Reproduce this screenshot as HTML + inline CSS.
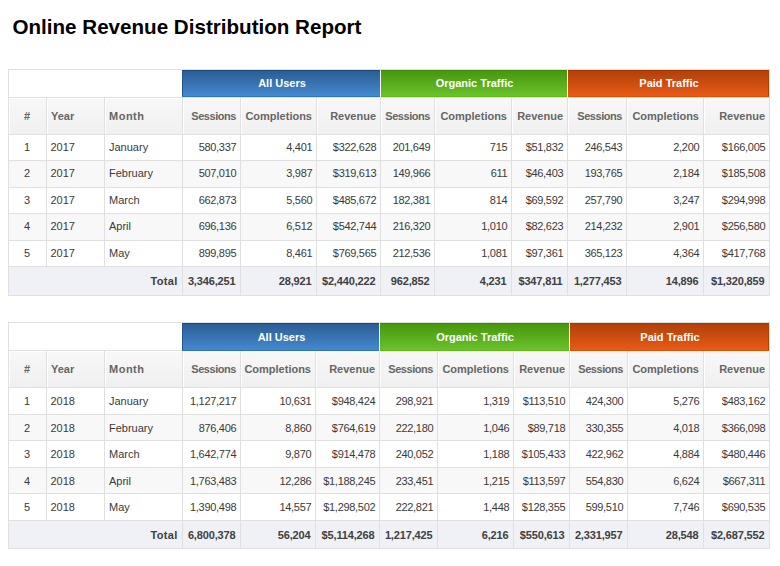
<!DOCTYPE html>
<html><head><meta charset="utf-8"><style>
html,body{margin:0;padding:0;background:#fff;width:780px;height:566px;overflow:hidden}
body{position:relative;font-family:"Liberation Sans",sans-serif}
div{position:absolute}
.t{white-space:nowrap;box-sizing:border-box}
.title{left:12.5px;top:15px;font-size:20.6px;font-weight:bold;color:#000;line-height:24px;white-space:nowrap}
.g{color:#fff;font-weight:bold;font-size:11px}
.h{color:#666;font-weight:bold;font-size:11px}
.d{color:#3a3a3a;font-size:11px}
.tt{color:#404040;font-weight:bold;font-size:11px}
.n{letter-spacing:-0.3px}
</style></head><body>
<div class="title">Online Revenue Distribution Report</div>
<div style="left:8px;top:69px;width:761px;height:226px;background:#fff"></div>
<div style="left:8px;top:97px;width:761px;height:37px;background:linear-gradient(#f8f8f8,#f0f0f0)"></div>
<div style="left:9px;top:98px;width:37px;height:36px;border-top:1px solid #fff;border-left:1px solid #fff;box-sizing:border-box"></div>
<div style="left:47px;top:98px;width:57px;height:36px;border-top:1px solid #fff;border-left:1px solid #fff;box-sizing:border-box"></div>
<div style="left:105px;top:98px;width:77px;height:36px;border-top:1px solid #fff;border-left:1px solid #fff;box-sizing:border-box"></div>
<div style="left:183px;top:98px;width:57px;height:36px;border-top:1px solid #fff;border-left:1px solid #fff;box-sizing:border-box"></div>
<div style="left:241px;top:98px;width:75px;height:36px;border-top:1px solid #fff;border-left:1px solid #fff;box-sizing:border-box"></div>
<div style="left:317px;top:98px;width:63px;height:36px;border-top:1px solid #fff;border-left:1px solid #fff;box-sizing:border-box"></div>
<div style="left:381px;top:98px;width:53px;height:36px;border-top:1px solid #fff;border-left:1px solid #fff;box-sizing:border-box"></div>
<div style="left:435px;top:98px;width:76px;height:36px;border-top:1px solid #fff;border-left:1px solid #fff;box-sizing:border-box"></div>
<div style="left:512px;top:98px;width:55px;height:36px;border-top:1px solid #fff;border-left:1px solid #fff;box-sizing:border-box"></div>
<div style="left:568px;top:98px;width:58px;height:36px;border-top:1px solid #fff;border-left:1px solid #fff;box-sizing:border-box"></div>
<div style="left:627px;top:98px;width:76px;height:36px;border-top:1px solid #fff;border-left:1px solid #fff;box-sizing:border-box"></div>
<div style="left:704px;top:98px;width:65px;height:36px;border-top:1px solid #fff;border-left:1px solid #fff;box-sizing:border-box"></div>
<div style="left:8px;top:160px;width:761px;height:27px;background:#f8f8f8"></div>
<div style="left:8px;top:213px;width:761px;height:27px;background:#f8f8f8"></div>
<div style="left:8px;top:266px;width:761px;height:29px;background:#eff1f6"></div>
<div style="left:8px;top:69px;width:762px;height:1px;background:#e0e0e0"></div>
<div style="left:8px;top:97px;width:762px;height:1px;background:#e0e0e0"></div>
<div style="left:8px;top:134px;width:762px;height:1px;background:#e0e0e0"></div>
<div style="left:8px;top:160px;width:762px;height:1px;background:#e0e0e0"></div>
<div style="left:8px;top:187px;width:762px;height:1px;background:#e0e0e0"></div>
<div style="left:8px;top:213px;width:762px;height:1px;background:#e0e0e0"></div>
<div style="left:8px;top:240px;width:762px;height:1px;background:#e0e0e0"></div>
<div style="left:8px;top:266px;width:762px;height:1px;background:#e0e0e0"></div>
<div style="left:8px;top:295px;width:762px;height:1px;background:#e0e0e0"></div>
<div style="left:8px;top:69px;width:1px;height:227px;background:#e0e0e0"></div>
<div style="left:46px;top:97px;width:1px;height:169px;background:#e0e0e0"></div>
<div style="left:104px;top:97px;width:1px;height:169px;background:#e0e0e0"></div>
<div style="left:182px;top:69px;width:1px;height:226px;background:#e0e0e0"></div>
<div style="left:240px;top:97px;width:1px;height:198px;background:#e0e0e0"></div>
<div style="left:316px;top:97px;width:1px;height:198px;background:#e0e0e0"></div>
<div style="left:380px;top:69px;width:1px;height:226px;background:#e0e0e0"></div>
<div style="left:434px;top:97px;width:1px;height:198px;background:#e0e0e0"></div>
<div style="left:511px;top:97px;width:1px;height:198px;background:#e0e0e0"></div>
<div style="left:567px;top:69px;width:1px;height:226px;background:#e0e0e0"></div>
<div style="left:626px;top:97px;width:1px;height:198px;background:#e0e0e0"></div>
<div style="left:703px;top:97px;width:1px;height:198px;background:#e0e0e0"></div>
<div style="left:769px;top:69px;width:1px;height:227px;background:#e0e0e0"></div>
<div style="left:182px;top:70px;width:198px;height:27px;background:linear-gradient(#2c5d95,#4489cf);border-top:1px solid #1c4a80;border-bottom:1px solid #2b78c0;border-left:1px solid #24558f;box-sizing:border-box"></div>
<div style="left:380px;top:70px;width:1px;height:27px;background:#f4f4f4"></div>
<div style="left:381px;top:70px;width:186px;height:27px;background:linear-gradient(#47980b,#6ac22c);border-top:1px solid #3a8a04;border-bottom:1px solid #5abd10;box-sizing:border-box"></div>
<div style="left:567px;top:70px;width:1px;height:27px;background:#f4f4f4"></div>
<div style="left:568px;top:70px;width:201px;height:27px;background:linear-gradient(#b2410a,#e85a16);border-top:1px solid #a83300;border-bottom:1px solid #e84c00;border-right:1px solid #b84000;box-sizing:border-box"></div>
<div class="t g" style="left:183px;top:70px;width:198px;height:27.5px;line-height:27.5px;text-align:center;">All Users</div>
<div class="t g" style="left:381px;top:70px;width:187px;height:27.5px;line-height:27.5px;text-align:center;">Organic Traffic</div>
<div class="t g" style="left:568px;top:70px;width:202px;height:27.5px;line-height:27.5px;text-align:center;">Paid Traffic</div>
<div class="t h" style="left:8px;top:98px;width:38px;height:37px;line-height:37px;text-align:center;">#</div>
<div class="t h" style="left:51px;top:98px;width:58px;height:37px;line-height:37px;text-align:left;">Year</div>
<div class="t h" style="left:109px;top:98px;width:78px;height:37px;line-height:37px;text-align:left;letter-spacing:0.5px">Month</div>
<div class="t h" style="left:182px;top:98px;width:54px;height:37px;line-height:37px;text-align:right;letter-spacing:-0.45px">Sessions</div>
<div class="t h" style="left:240px;top:98px;width:72px;height:37px;line-height:37px;text-align:right;">Completions</div>
<div class="t h" style="left:316px;top:98px;width:60px;height:37px;line-height:37px;text-align:right;">Revenue</div>
<div class="t h" style="left:380px;top:98px;width:50px;height:37px;line-height:37px;text-align:right;letter-spacing:-0.45px">Sessions</div>
<div class="t h" style="left:434px;top:98px;width:73px;height:37px;line-height:37px;text-align:right;">Completions</div>
<div class="t h" style="left:511px;top:98px;width:52px;height:37px;line-height:37px;text-align:right;">Revenue</div>
<div class="t h" style="left:567px;top:98px;width:55px;height:37px;line-height:37px;text-align:right;letter-spacing:-0.45px">Sessions</div>
<div class="t h" style="left:626px;top:98px;width:73px;height:37px;line-height:37px;text-align:right;">Completions</div>
<div class="t h" style="left:703px;top:98px;width:62px;height:37px;line-height:37px;text-align:right;">Revenue</div>
<div class="t d" style="left:8px;top:134px;width:38px;height:26px;line-height:26px;text-align:center;">1</div>
<div class="t d" style="left:50.5px;top:134px;width:58px;height:26px;line-height:26px;text-align:left;">2017</div>
<div class="t d" style="left:109px;top:134px;width:78px;height:26px;line-height:26px;text-align:left;">January</div>
<div class="t d n" style="left:182px;top:134px;width:54.3px;height:26px;line-height:26px;text-align:right;">580,337</div>
<div class="t d n" style="left:240px;top:134px;width:72.3px;height:26px;line-height:26px;text-align:right;">4,401</div>
<div class="t d n" style="left:316px;top:134px;width:60.3px;height:26px;line-height:26px;text-align:right;">$322,628</div>
<div class="t d n" style="left:380px;top:134px;width:50.3px;height:26px;line-height:26px;text-align:right;">201,649</div>
<div class="t d n" style="left:434px;top:134px;width:73.3px;height:26px;line-height:26px;text-align:right;">715</div>
<div class="t d n" style="left:511px;top:134px;width:52.3px;height:26px;line-height:26px;text-align:right;">$51,832</div>
<div class="t d n" style="left:567px;top:134px;width:55.3px;height:26px;line-height:26px;text-align:right;">246,543</div>
<div class="t d n" style="left:626px;top:134px;width:73.3px;height:26px;line-height:26px;text-align:right;">2,200</div>
<div class="t d n" style="left:703px;top:134px;width:62.3px;height:26px;line-height:26px;text-align:right;">$166,005</div>
<div class="t d" style="left:8px;top:160px;width:38px;height:27px;line-height:27px;text-align:center;">2</div>
<div class="t d" style="left:50.5px;top:160px;width:58px;height:27px;line-height:27px;text-align:left;">2017</div>
<div class="t d" style="left:109px;top:160px;width:78px;height:27px;line-height:27px;text-align:left;">February</div>
<div class="t d n" style="left:182px;top:160px;width:54.3px;height:27px;line-height:27px;text-align:right;">507,010</div>
<div class="t d n" style="left:240px;top:160px;width:72.3px;height:27px;line-height:27px;text-align:right;">3,987</div>
<div class="t d n" style="left:316px;top:160px;width:60.3px;height:27px;line-height:27px;text-align:right;">$319,613</div>
<div class="t d n" style="left:380px;top:160px;width:50.3px;height:27px;line-height:27px;text-align:right;">149,966</div>
<div class="t d n" style="left:434px;top:160px;width:73.3px;height:27px;line-height:27px;text-align:right;">611</div>
<div class="t d n" style="left:511px;top:160px;width:52.3px;height:27px;line-height:27px;text-align:right;">$46,403</div>
<div class="t d n" style="left:567px;top:160px;width:55.3px;height:27px;line-height:27px;text-align:right;">193,765</div>
<div class="t d n" style="left:626px;top:160px;width:73.3px;height:27px;line-height:27px;text-align:right;">2,184</div>
<div class="t d n" style="left:703px;top:160px;width:62.3px;height:27px;line-height:27px;text-align:right;">$185,508</div>
<div class="t d" style="left:8px;top:187px;width:38px;height:26px;line-height:26px;text-align:center;">3</div>
<div class="t d" style="left:50.5px;top:187px;width:58px;height:26px;line-height:26px;text-align:left;">2017</div>
<div class="t d" style="left:109px;top:187px;width:78px;height:26px;line-height:26px;text-align:left;">March</div>
<div class="t d n" style="left:182px;top:187px;width:54.3px;height:26px;line-height:26px;text-align:right;">662,873</div>
<div class="t d n" style="left:240px;top:187px;width:72.3px;height:26px;line-height:26px;text-align:right;">5,560</div>
<div class="t d n" style="left:316px;top:187px;width:60.3px;height:26px;line-height:26px;text-align:right;">$485,672</div>
<div class="t d n" style="left:380px;top:187px;width:50.3px;height:26px;line-height:26px;text-align:right;">182,381</div>
<div class="t d n" style="left:434px;top:187px;width:73.3px;height:26px;line-height:26px;text-align:right;">814</div>
<div class="t d n" style="left:511px;top:187px;width:52.3px;height:26px;line-height:26px;text-align:right;">$69,592</div>
<div class="t d n" style="left:567px;top:187px;width:55.3px;height:26px;line-height:26px;text-align:right;">257,790</div>
<div class="t d n" style="left:626px;top:187px;width:73.3px;height:26px;line-height:26px;text-align:right;">3,247</div>
<div class="t d n" style="left:703px;top:187px;width:62.3px;height:26px;line-height:26px;text-align:right;">$294,998</div>
<div class="t d" style="left:8px;top:213px;width:38px;height:27px;line-height:27px;text-align:center;">4</div>
<div class="t d" style="left:50.5px;top:213px;width:58px;height:27px;line-height:27px;text-align:left;">2017</div>
<div class="t d" style="left:109px;top:213px;width:78px;height:27px;line-height:27px;text-align:left;">April</div>
<div class="t d n" style="left:182px;top:213px;width:54.3px;height:27px;line-height:27px;text-align:right;">696,136</div>
<div class="t d n" style="left:240px;top:213px;width:72.3px;height:27px;line-height:27px;text-align:right;">6,512</div>
<div class="t d n" style="left:316px;top:213px;width:60.3px;height:27px;line-height:27px;text-align:right;">$542,744</div>
<div class="t d n" style="left:380px;top:213px;width:50.3px;height:27px;line-height:27px;text-align:right;">216,320</div>
<div class="t d n" style="left:434px;top:213px;width:73.3px;height:27px;line-height:27px;text-align:right;">1,010</div>
<div class="t d n" style="left:511px;top:213px;width:52.3px;height:27px;line-height:27px;text-align:right;">$82,623</div>
<div class="t d n" style="left:567px;top:213px;width:55.3px;height:27px;line-height:27px;text-align:right;">214,232</div>
<div class="t d n" style="left:626px;top:213px;width:73.3px;height:27px;line-height:27px;text-align:right;">2,901</div>
<div class="t d n" style="left:703px;top:213px;width:62.3px;height:27px;line-height:27px;text-align:right;">$256,580</div>
<div class="t d" style="left:8px;top:240px;width:38px;height:26px;line-height:26px;text-align:center;">5</div>
<div class="t d" style="left:50.5px;top:240px;width:58px;height:26px;line-height:26px;text-align:left;">2017</div>
<div class="t d" style="left:109px;top:240px;width:78px;height:26px;line-height:26px;text-align:left;">May</div>
<div class="t d n" style="left:182px;top:240px;width:54.3px;height:26px;line-height:26px;text-align:right;">899,895</div>
<div class="t d n" style="left:240px;top:240px;width:72.3px;height:26px;line-height:26px;text-align:right;">8,461</div>
<div class="t d n" style="left:316px;top:240px;width:60.3px;height:26px;line-height:26px;text-align:right;">$769,565</div>
<div class="t d n" style="left:380px;top:240px;width:50.3px;height:26px;line-height:26px;text-align:right;">212,536</div>
<div class="t d n" style="left:434px;top:240px;width:73.3px;height:26px;line-height:26px;text-align:right;">1,081</div>
<div class="t d n" style="left:511px;top:240px;width:52.3px;height:26px;line-height:26px;text-align:right;">$97,361</div>
<div class="t d n" style="left:567px;top:240px;width:55.3px;height:26px;line-height:26px;text-align:right;">365,123</div>
<div class="t d n" style="left:626px;top:240px;width:73.3px;height:26px;line-height:26px;text-align:right;">4,364</div>
<div class="t d n" style="left:703px;top:240px;width:62.3px;height:26px;line-height:26px;text-align:right;">$417,768</div>
<div class="t tt" style="left:8px;top:267px;width:169.5px;height:29px;line-height:29px;text-align:right;letter-spacing:0.3px">Total</div>
<div class="t tt" style="left:182px;top:267px;width:53.5px;height:29px;line-height:29px;text-align:right;letter-spacing:-0.15px">3,346,251</div>
<div class="t tt" style="left:240px;top:267px;width:71.5px;height:29px;line-height:29px;text-align:right;letter-spacing:-0.15px">28,921</div>
<div class="t tt" style="left:316px;top:267px;width:59.5px;height:29px;line-height:29px;text-align:right;letter-spacing:-0.15px">$2,440,222</div>
<div class="t tt" style="left:380px;top:267px;width:49.5px;height:29px;line-height:29px;text-align:right;letter-spacing:-0.15px">962,852</div>
<div class="t tt" style="left:434px;top:267px;width:72.5px;height:29px;line-height:29px;text-align:right;letter-spacing:-0.15px">4,231</div>
<div class="t tt" style="left:511px;top:267px;width:51.5px;height:29px;line-height:29px;text-align:right;letter-spacing:-0.15px">$347,811</div>
<div class="t tt" style="left:567px;top:267px;width:54.5px;height:29px;line-height:29px;text-align:right;letter-spacing:-0.15px">1,277,453</div>
<div class="t tt" style="left:626px;top:267px;width:72.5px;height:29px;line-height:29px;text-align:right;letter-spacing:-0.15px">14,896</div>
<div class="t tt" style="left:703px;top:267px;width:61.5px;height:29px;line-height:29px;text-align:right;letter-spacing:-0.15px">$1,320,859</div>
<div style="left:8px;top:322px;width:761px;height:226px;background:#fff"></div>
<div style="left:8px;top:350px;width:761px;height:37px;background:linear-gradient(#f8f8f8,#f0f0f0)"></div>
<div style="left:9px;top:351px;width:37px;height:36px;border-top:1px solid #fff;border-left:1px solid #fff;box-sizing:border-box"></div>
<div style="left:47px;top:351px;width:57px;height:36px;border-top:1px solid #fff;border-left:1px solid #fff;box-sizing:border-box"></div>
<div style="left:105px;top:351px;width:77px;height:36px;border-top:1px solid #fff;border-left:1px solid #fff;box-sizing:border-box"></div>
<div style="left:183px;top:351px;width:57px;height:36px;border-top:1px solid #fff;border-left:1px solid #fff;box-sizing:border-box"></div>
<div style="left:241px;top:351px;width:74px;height:36px;border-top:1px solid #fff;border-left:1px solid #fff;box-sizing:border-box"></div>
<div style="left:316px;top:351px;width:63px;height:36px;border-top:1px solid #fff;border-left:1px solid #fff;box-sizing:border-box"></div>
<div style="left:380px;top:351px;width:57px;height:36px;border-top:1px solid #fff;border-left:1px solid #fff;box-sizing:border-box"></div>
<div style="left:438px;top:351px;width:75px;height:36px;border-top:1px solid #fff;border-left:1px solid #fff;box-sizing:border-box"></div>
<div style="left:514px;top:351px;width:55px;height:36px;border-top:1px solid #fff;border-left:1px solid #fff;box-sizing:border-box"></div>
<div style="left:570px;top:351px;width:57px;height:36px;border-top:1px solid #fff;border-left:1px solid #fff;box-sizing:border-box"></div>
<div style="left:628px;top:351px;width:75px;height:36px;border-top:1px solid #fff;border-left:1px solid #fff;box-sizing:border-box"></div>
<div style="left:704px;top:351px;width:65px;height:36px;border-top:1px solid #fff;border-left:1px solid #fff;box-sizing:border-box"></div>
<div style="left:8px;top:414px;width:761px;height:26px;background:#f8f8f8"></div>
<div style="left:8px;top:467px;width:761px;height:26px;background:#f8f8f8"></div>
<div style="left:8px;top:520px;width:761px;height:28px;background:#eff1f6"></div>
<div style="left:8px;top:322px;width:762px;height:1px;background:#e0e0e0"></div>
<div style="left:8px;top:350px;width:762px;height:1px;background:#e0e0e0"></div>
<div style="left:8px;top:387px;width:762px;height:1px;background:#e0e0e0"></div>
<div style="left:8px;top:414px;width:762px;height:1px;background:#e0e0e0"></div>
<div style="left:8px;top:440px;width:762px;height:1px;background:#e0e0e0"></div>
<div style="left:8px;top:467px;width:762px;height:1px;background:#e0e0e0"></div>
<div style="left:8px;top:493px;width:762px;height:1px;background:#e0e0e0"></div>
<div style="left:8px;top:520px;width:762px;height:1px;background:#e0e0e0"></div>
<div style="left:8px;top:548px;width:762px;height:1px;background:#e0e0e0"></div>
<div style="left:8px;top:322px;width:1px;height:227px;background:#e0e0e0"></div>
<div style="left:46px;top:350px;width:1px;height:170px;background:#e0e0e0"></div>
<div style="left:104px;top:350px;width:1px;height:170px;background:#e0e0e0"></div>
<div style="left:182px;top:322px;width:1px;height:226px;background:#e0e0e0"></div>
<div style="left:240px;top:350px;width:1px;height:198px;background:#e0e0e0"></div>
<div style="left:315px;top:350px;width:1px;height:198px;background:#e0e0e0"></div>
<div style="left:379px;top:322px;width:1px;height:226px;background:#e0e0e0"></div>
<div style="left:437px;top:350px;width:1px;height:198px;background:#e0e0e0"></div>
<div style="left:513px;top:350px;width:1px;height:198px;background:#e0e0e0"></div>
<div style="left:569px;top:322px;width:1px;height:226px;background:#e0e0e0"></div>
<div style="left:627px;top:350px;width:1px;height:198px;background:#e0e0e0"></div>
<div style="left:703px;top:350px;width:1px;height:198px;background:#e0e0e0"></div>
<div style="left:769px;top:322px;width:1px;height:227px;background:#e0e0e0"></div>
<div style="left:182px;top:323px;width:197px;height:28px;background:linear-gradient(#2c5d95,#4489cf);border-top:1px solid #1c4a80;border-bottom:1px solid #2b78c0;border-left:1px solid #24558f;box-sizing:border-box"></div>
<div style="left:379px;top:323px;width:1px;height:28px;background:#f4f4f4"></div>
<div style="left:380px;top:323px;width:189px;height:28px;background:linear-gradient(#47980b,#6ac22c);border-top:1px solid #3a8a04;border-bottom:1px solid #5abd10;box-sizing:border-box"></div>
<div style="left:569px;top:323px;width:1px;height:28px;background:#f4f4f4"></div>
<div style="left:570px;top:323px;width:199px;height:28px;background:linear-gradient(#b2410a,#e85a16);border-top:1px solid #a83300;border-bottom:1px solid #e84c00;border-right:1px solid #b84000;box-sizing:border-box"></div>
<div class="t g" style="left:183px;top:323px;width:197px;height:28.5px;line-height:28.5px;text-align:center;">All Users</div>
<div class="t g" style="left:380px;top:323px;width:190px;height:28.5px;line-height:28.5px;text-align:center;">Organic Traffic</div>
<div class="t g" style="left:570px;top:323px;width:200px;height:28.5px;line-height:28.5px;text-align:center;">Paid Traffic</div>
<div class="t h" style="left:8px;top:351px;width:38px;height:37px;line-height:37px;text-align:center;">#</div>
<div class="t h" style="left:51px;top:351px;width:58px;height:37px;line-height:37px;text-align:left;">Year</div>
<div class="t h" style="left:109px;top:351px;width:78px;height:37px;line-height:37px;text-align:left;letter-spacing:0.5px">Month</div>
<div class="t h" style="left:182px;top:351px;width:54px;height:37px;line-height:37px;text-align:right;letter-spacing:-0.45px">Sessions</div>
<div class="t h" style="left:240px;top:351px;width:71px;height:37px;line-height:37px;text-align:right;">Completions</div>
<div class="t h" style="left:315px;top:351px;width:60px;height:37px;line-height:37px;text-align:right;">Revenue</div>
<div class="t h" style="left:379px;top:351px;width:54px;height:37px;line-height:37px;text-align:right;letter-spacing:-0.45px">Sessions</div>
<div class="t h" style="left:437px;top:351px;width:72px;height:37px;line-height:37px;text-align:right;">Completions</div>
<div class="t h" style="left:513px;top:351px;width:52px;height:37px;line-height:37px;text-align:right;">Revenue</div>
<div class="t h" style="left:569px;top:351px;width:54px;height:37px;line-height:37px;text-align:right;letter-spacing:-0.45px">Sessions</div>
<div class="t h" style="left:627px;top:351px;width:72px;height:37px;line-height:37px;text-align:right;">Completions</div>
<div class="t h" style="left:703px;top:351px;width:62px;height:37px;line-height:37px;text-align:right;">Revenue</div>
<div class="t d" style="left:8px;top:388px;width:38px;height:27px;line-height:27px;text-align:center;">1</div>
<div class="t d" style="left:50.5px;top:388px;width:58px;height:27px;line-height:27px;text-align:left;">2018</div>
<div class="t d" style="left:109px;top:388px;width:78px;height:27px;line-height:27px;text-align:left;">January</div>
<div class="t d n" style="left:182px;top:388px;width:54.3px;height:27px;line-height:27px;text-align:right;">1,127,217</div>
<div class="t d n" style="left:240px;top:388px;width:71.3px;height:27px;line-height:27px;text-align:right;">10,631</div>
<div class="t d n" style="left:315px;top:388px;width:60.3px;height:27px;line-height:27px;text-align:right;">$948,424</div>
<div class="t d n" style="left:379px;top:388px;width:54.3px;height:27px;line-height:27px;text-align:right;">298,921</div>
<div class="t d n" style="left:437px;top:388px;width:72.3px;height:27px;line-height:27px;text-align:right;">1,319</div>
<div class="t d n" style="left:513px;top:388px;width:52.3px;height:27px;line-height:27px;text-align:right;">$113,510</div>
<div class="t d n" style="left:569px;top:388px;width:54.3px;height:27px;line-height:27px;text-align:right;">424,300</div>
<div class="t d n" style="left:627px;top:388px;width:72.3px;height:27px;line-height:27px;text-align:right;">5,276</div>
<div class="t d n" style="left:703px;top:388px;width:62.3px;height:27px;line-height:27px;text-align:right;">$483,162</div>
<div class="t d" style="left:8px;top:415px;width:38px;height:26px;line-height:26px;text-align:center;">2</div>
<div class="t d" style="left:50.5px;top:415px;width:58px;height:26px;line-height:26px;text-align:left;">2018</div>
<div class="t d" style="left:109px;top:415px;width:78px;height:26px;line-height:26px;text-align:left;">February</div>
<div class="t d n" style="left:182px;top:415px;width:54.3px;height:26px;line-height:26px;text-align:right;">876,406</div>
<div class="t d n" style="left:240px;top:415px;width:71.3px;height:26px;line-height:26px;text-align:right;">8,860</div>
<div class="t d n" style="left:315px;top:415px;width:60.3px;height:26px;line-height:26px;text-align:right;">$764,619</div>
<div class="t d n" style="left:379px;top:415px;width:54.3px;height:26px;line-height:26px;text-align:right;">222,180</div>
<div class="t d n" style="left:437px;top:415px;width:72.3px;height:26px;line-height:26px;text-align:right;">1,046</div>
<div class="t d n" style="left:513px;top:415px;width:52.3px;height:26px;line-height:26px;text-align:right;">$89,718</div>
<div class="t d n" style="left:569px;top:415px;width:54.3px;height:26px;line-height:26px;text-align:right;">330,355</div>
<div class="t d n" style="left:627px;top:415px;width:72.3px;height:26px;line-height:26px;text-align:right;">4,018</div>
<div class="t d n" style="left:703px;top:415px;width:62.3px;height:26px;line-height:26px;text-align:right;">$366,098</div>
<div class="t d" style="left:8px;top:441px;width:38px;height:27px;line-height:27px;text-align:center;">3</div>
<div class="t d" style="left:50.5px;top:441px;width:58px;height:27px;line-height:27px;text-align:left;">2018</div>
<div class="t d" style="left:109px;top:441px;width:78px;height:27px;line-height:27px;text-align:left;">March</div>
<div class="t d n" style="left:182px;top:441px;width:54.3px;height:27px;line-height:27px;text-align:right;">1,642,774</div>
<div class="t d n" style="left:240px;top:441px;width:71.3px;height:27px;line-height:27px;text-align:right;">9,870</div>
<div class="t d n" style="left:315px;top:441px;width:60.3px;height:27px;line-height:27px;text-align:right;">$914,478</div>
<div class="t d n" style="left:379px;top:441px;width:54.3px;height:27px;line-height:27px;text-align:right;">240,052</div>
<div class="t d n" style="left:437px;top:441px;width:72.3px;height:27px;line-height:27px;text-align:right;">1,188</div>
<div class="t d n" style="left:513px;top:441px;width:52.3px;height:27px;line-height:27px;text-align:right;">$105,433</div>
<div class="t d n" style="left:569px;top:441px;width:54.3px;height:27px;line-height:27px;text-align:right;">422,962</div>
<div class="t d n" style="left:627px;top:441px;width:72.3px;height:27px;line-height:27px;text-align:right;">4,884</div>
<div class="t d n" style="left:703px;top:441px;width:62.3px;height:27px;line-height:27px;text-align:right;">$480,446</div>
<div class="t d" style="left:8px;top:468px;width:38px;height:26px;line-height:26px;text-align:center;">4</div>
<div class="t d" style="left:50.5px;top:468px;width:58px;height:26px;line-height:26px;text-align:left;">2018</div>
<div class="t d" style="left:109px;top:468px;width:78px;height:26px;line-height:26px;text-align:left;">April</div>
<div class="t d n" style="left:182px;top:468px;width:54.3px;height:26px;line-height:26px;text-align:right;">1,763,483</div>
<div class="t d n" style="left:240px;top:468px;width:71.3px;height:26px;line-height:26px;text-align:right;">12,286</div>
<div class="t d n" style="left:315px;top:468px;width:60.3px;height:26px;line-height:26px;text-align:right;">$1,188,245</div>
<div class="t d n" style="left:379px;top:468px;width:54.3px;height:26px;line-height:26px;text-align:right;">233,451</div>
<div class="t d n" style="left:437px;top:468px;width:72.3px;height:26px;line-height:26px;text-align:right;">1,215</div>
<div class="t d n" style="left:513px;top:468px;width:52.3px;height:26px;line-height:26px;text-align:right;">$113,597</div>
<div class="t d n" style="left:569px;top:468px;width:54.3px;height:26px;line-height:26px;text-align:right;">554,830</div>
<div class="t d n" style="left:627px;top:468px;width:72.3px;height:26px;line-height:26px;text-align:right;">6,624</div>
<div class="t d n" style="left:703px;top:468px;width:62.3px;height:26px;line-height:26px;text-align:right;">$667,311</div>
<div class="t d" style="left:8px;top:494px;width:38px;height:27px;line-height:27px;text-align:center;">5</div>
<div class="t d" style="left:50.5px;top:494px;width:58px;height:27px;line-height:27px;text-align:left;">2018</div>
<div class="t d" style="left:109px;top:494px;width:78px;height:27px;line-height:27px;text-align:left;">May</div>
<div class="t d n" style="left:182px;top:494px;width:54.3px;height:27px;line-height:27px;text-align:right;">1,390,498</div>
<div class="t d n" style="left:240px;top:494px;width:71.3px;height:27px;line-height:27px;text-align:right;">14,557</div>
<div class="t d n" style="left:315px;top:494px;width:60.3px;height:27px;line-height:27px;text-align:right;">$1,298,502</div>
<div class="t d n" style="left:379px;top:494px;width:54.3px;height:27px;line-height:27px;text-align:right;">222,821</div>
<div class="t d n" style="left:437px;top:494px;width:72.3px;height:27px;line-height:27px;text-align:right;">1,448</div>
<div class="t d n" style="left:513px;top:494px;width:52.3px;height:27px;line-height:27px;text-align:right;">$128,355</div>
<div class="t d n" style="left:569px;top:494px;width:54.3px;height:27px;line-height:27px;text-align:right;">599,510</div>
<div class="t d n" style="left:627px;top:494px;width:72.3px;height:27px;line-height:27px;text-align:right;">7,746</div>
<div class="t d n" style="left:703px;top:494px;width:62.3px;height:27px;line-height:27px;text-align:right;">$690,535</div>
<div class="t tt" style="left:8px;top:521px;width:169.5px;height:28px;line-height:28px;text-align:right;letter-spacing:0.3px">Total</div>
<div class="t tt" style="left:182px;top:521px;width:53.5px;height:28px;line-height:28px;text-align:right;letter-spacing:-0.15px">6,800,378</div>
<div class="t tt" style="left:240px;top:521px;width:70.5px;height:28px;line-height:28px;text-align:right;letter-spacing:-0.15px">56,204</div>
<div class="t tt" style="left:315px;top:521px;width:59.5px;height:28px;line-height:28px;text-align:right;letter-spacing:-0.15px">$5,114,268</div>
<div class="t tt" style="left:379px;top:521px;width:53.5px;height:28px;line-height:28px;text-align:right;letter-spacing:-0.15px">1,217,425</div>
<div class="t tt" style="left:437px;top:521px;width:71.5px;height:28px;line-height:28px;text-align:right;letter-spacing:-0.15px">6,216</div>
<div class="t tt" style="left:513px;top:521px;width:51.5px;height:28px;line-height:28px;text-align:right;letter-spacing:-0.15px">$550,613</div>
<div class="t tt" style="left:569px;top:521px;width:53.5px;height:28px;line-height:28px;text-align:right;letter-spacing:-0.15px">2,331,957</div>
<div class="t tt" style="left:627px;top:521px;width:71.5px;height:28px;line-height:28px;text-align:right;letter-spacing:-0.15px">28,548</div>
<div class="t tt" style="left:703px;top:521px;width:61.5px;height:28px;line-height:28px;text-align:right;letter-spacing:-0.15px">$2,687,552</div>
</body></html>
